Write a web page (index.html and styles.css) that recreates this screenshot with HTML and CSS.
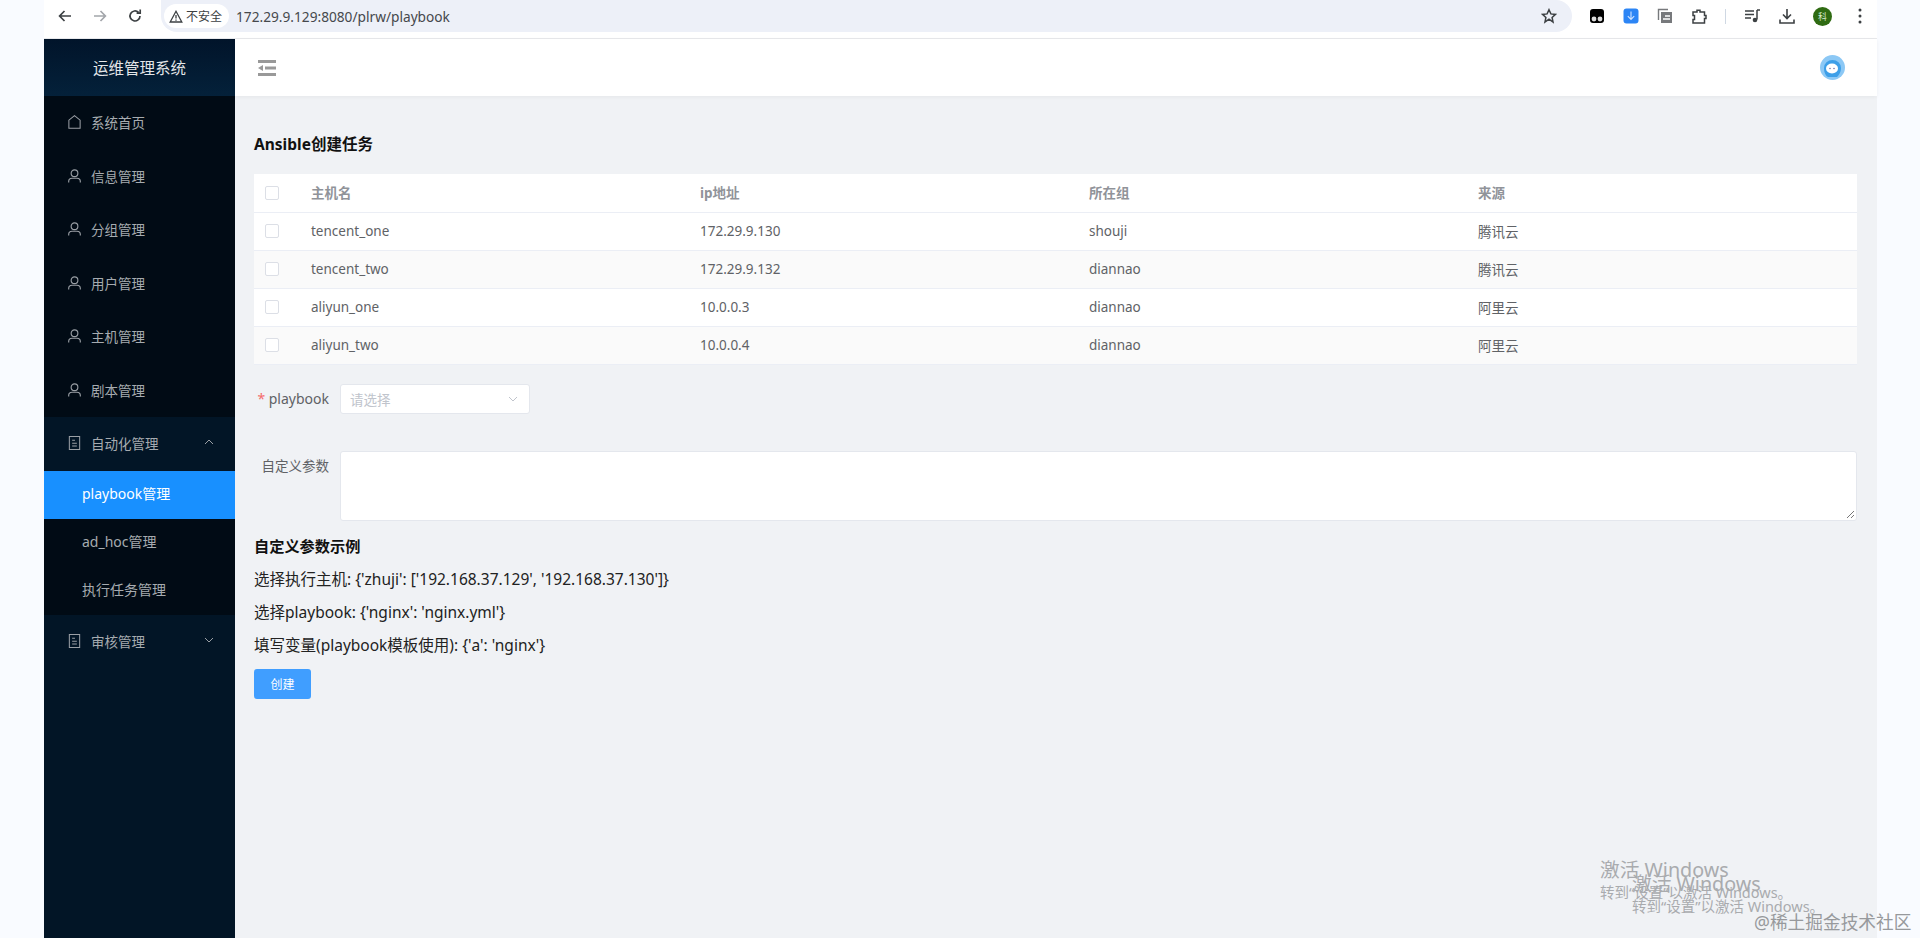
FILE: index.html
```html
<!DOCTYPE html>
<html lang="en">
<head>
    <meta charset="UTF-8">
    <meta name="viewport" content="width=device-width, initial-scale=1.0">
    <title>Ansible创建任务</title>
    <link rel="stylesheet" href="styles.css">
</head>
<body>
    <svg class="icon-defs" width="0" height="0">
        <symbol id="i-home" viewBox="0 0 16 16"><path d="M8 1.2 2 6v8.6h12V6z" fill="none" stroke="currentColor" stroke-width="1.1"/></symbol>
        <symbol id="i-user" viewBox="0 0 16 16"><circle cx="8" cy="5" r="3.6" fill="none" stroke="currentColor" stroke-width="1.2"/><path d="M1.8 15v-1.2c0-2 1.6-3.4 3.6-3.4h5.2c2 0 3.6 1.4 3.6 3.4V15" fill="none" stroke="currentColor" stroke-width="1.2"/></symbol>
        <symbol id="i-doc" viewBox="0 0 16 16"><path d="M2.5 1h11v14h-11zM5.5 5h3M5.5 8.2h5M5.5 11.2h5" fill="none" stroke="currentColor" stroke-width="1.1"/></symbol>
        <symbol id="i-down" viewBox="0 0 12 12"><path d="M2 4l4 4 4-4" fill="none" stroke="currentColor" stroke-width="1"/></symbol>
    </svg>

    <div class="window">
        <!-- browser toolbar -->
        <div class="browser-bar">
            <div class="nav-btns">
                <svg width="16" height="16" viewBox="0 0 16 16"><path d="M14 8H3M7.5 3 2.6 8l4.9 5" fill="none" stroke="#3c4043" stroke-width="1.7"/></svg>
                <svg width="16" height="16" viewBox="0 0 16 16"><path d="M2 8h11M8.500 3l4.900 5-4.900 5" fill="none" stroke="#a3a6ab" stroke-width="1.7"/></svg>
                <svg width="16" height="16" viewBox="0 0 16 16"><path d="M13 8a5 5 0 1 1-1.500-3.600M13.200 1.600v3.600H9.600" fill="none" stroke="#3c4043" stroke-width="1.700"/></svg>
            </div>
            <div class="omnibox">
                <div class="security-chip">
                    <svg width="14" height="13" viewBox="0 0 14 13"><path d="M7 1.300 1.200 12h11.600zM7 5v3.600M7 9.600v1.200" fill="none" stroke="#3c4043" stroke-width="1.300"/></svg>
                    <span>不安全</span>
                </div>
                <span class="url">172.29.9.129:8080/plrw/playbook</span>
                <svg class="star" width="16" height="16" viewBox="0 0 16 16"><path d="m8 1.700 1.900 4.200 4.600.5-3.400 3.100.9 4.500L8 11.200l-4 2.800.9-4.500L1.500 6.400l4.600-.5z" fill="none" stroke="#3c4043" stroke-width="1.500"/></svg>
            </div>
            <div class="ext-icons">
                <svg width="16" height="16" viewBox="0 0 16 16"><rect x="1" y="1" width="14" height="14" rx="3" fill="#000"/><circle cx="5" cy="11" r="2.400" fill="#ddd"/><circle cx="11" cy="11" r="2.400" fill="#ddd"/></svg>
                <svg width="16" height="16" viewBox="0 0 16 16"><rect x="0.500" y="0.500" width="15" height="15" rx="3" fill="#2c85f5"/><path d="M8 3.500v8M4.800 8.200 8 11.500l3.200-3.300" fill="none" stroke="#cfe3ff" stroke-width="1.100"/></svg>
                <svg width="16" height="16" viewBox="0 0 16 16"><path d="M1.500 12V1.500H11" fill="none" stroke="#77797c" stroke-width="1.400"/><rect x="4" y="4" width="11" height="11" fill="#77797c"/><path d="M8 8h5M6 11h7" stroke="#fff" stroke-width="1.300"/></svg>
                <svg width="17" height="17" viewBox="0 0 17 17"><path d="M2 4h4V2.200h3V4h4.500v3.500H15v3h-1.500V15H2v-3.500h1.500v-4H2z" fill="none" stroke="#3c4043" stroke-width="1.500"/></svg>
                <span class="ext-sep"></span>
                <svg width="17" height="16" viewBox="0 0 17 16"><path d="M1 3h9M1 6.500h9M1 10h6" stroke="#3c4043" stroke-width="1.500"/><path d="M13 2v9.500" stroke="#3c4043" stroke-width="1.500"/><path d="M13 2h3" stroke="#3c4043" stroke-width="1.500"/><circle cx="11" cy="12" r="2.300" fill="#3c4043"/></svg>
                <svg width="16" height="16" viewBox="0 0 16 16"><path d="M8 1v9M4 6.500 8 10.500l4-4M1 11.500V15h14v-3.500" fill="none" stroke="#3c4043" stroke-width="1.600"/></svg>
                <span class="profile">科</span>
                <svg class="dots" width="4" height="16" viewBox="0 0 4 16"><circle cx="2" cy="2" r="1.500" fill="#3c4043"/><circle cx="2" cy="8" r="1.500" fill="#3c4043"/><circle cx="2" cy="14" r="1.500" fill="#3c4043"/></svg>
            </div>
        </div>

        <div class="app">
            <!-- left menu -->
            <aside class="sidebar">
                <div class="logo">运维管理系统</div>
                <ul class="menu">
                    <li class="menu-item"><svg class="menu-icon"><use href="#i-home"/></svg>系统首页</li>
                    <li class="menu-item"><svg class="menu-icon"><use href="#i-user"/></svg>信息管理</li>
                    <li class="menu-item"><svg class="menu-icon"><use href="#i-user"/></svg>分组管理</li>
                    <li class="menu-item"><svg class="menu-icon"><use href="#i-user"/></svg>用户管理</li>
                    <li class="menu-item"><svg class="menu-icon"><use href="#i-user"/></svg>主机管理</li>
                    <li class="menu-item"><svg class="menu-icon"><use href="#i-user"/></svg>剧本管理</li>
                </ul>
                <div class="menu-lower">
                    <div class="menu-item">
                        <svg class="menu-icon"><use href="#i-doc"/></svg>自动化管理
                        <svg class="menu-arrow flip"><use href="#i-down"/></svg>
                    </div>
                    <ul class="submenu">
                        <li class="sub-item active">playbook管理</li>
                        <li class="sub-item">ad_hoc管理</li>
                        <li class="sub-item">执行任务管理</li>
                    </ul>
                    <div class="menu-item">
                        <svg class="menu-icon"><use href="#i-doc"/></svg>审核管理
                        <svg class="menu-arrow"><use href="#i-down"/></svg>
                    </div>
                </div>
            </aside>

            <div class="main">
                <header class="topbar">
                    <svg class="fold-icon" width="18" height="16" viewBox="0 0 18 16">
                        <path d="M0 1.500h18M7 8h11M0 14.500h18" stroke="#999" stroke-width="3"/>
                        <path d="M0 8l5-3v6z" fill="#999"/>
                    </svg>
                    <svg class="mascot" width="25" height="25" viewBox="0 0 25 25">
                        <circle cx="12.500" cy="12.500" r="12.500" fill="#8cc8f5"/>
                        <path d="M4 13a8.500 8 0 0 1 17 0c0 5-3 8-4 9H8c-2-1-4-4-4-9z" fill="#3d9fe8"/>
                        <ellipse cx="12" cy="13.500" rx="6" ry="5" fill="#fff"/>
                        <circle cx="10" cy="13.500" r=".8" fill="#77a"/>
                        <circle cx="14" cy="13.500" r=".8" fill="#77a"/>
                    </svg>
                </header>

                <div class="content">
                    <h3 class="page-title">Ansible创建任务</h3>

                    <table class="host-table">
                        <thead>
                            <tr>
                                <th class="check-col"><span class="checkbox"></span></th>
                                <th>主机名</th>
                                <th>ip地址</th>
                                <th>所在组</th>
                                <th>来源</th>
                            </tr>
                        </thead>
                        <tbody>
                            <tr>
                                <td class="check-col"><span class="checkbox"></span></td>
                                <td>tencent_one</td>
                                <td>172.29.9.130</td>
                                <td>shouji</td>
                                <td>腾讯云</td>
                            </tr>
                            <tr class="striped">
                                <td class="check-col"><span class="checkbox"></span></td>
                                <td>tencent_two</td>
                                <td>172.29.9.132</td>
                                <td>diannao</td>
                                <td>腾讯云</td>
                            </tr>
                            <tr>
                                <td class="check-col"><span class="checkbox"></span></td>
                                <td>aliyun_one</td>
                                <td>10.0.0.3</td>
                                <td>diannao</td>
                                <td>阿里云</td>
                            </tr>
                            <tr class="striped">
                                <td class="check-col"><span class="checkbox"></span></td>
                                <td>aliyun_two</td>
                                <td>10.0.0.4</td>
                                <td>diannao</td>
                                <td>阿里云</td>
                            </tr>
                        </tbody>
                    </table>

                    <div class="form-row select-row">
                        <label class="form-label"><span class="required">*</span> playbook</label>
                        <div class="select-box">
                            <span>请选择</span>
                            <svg width="12" height="12"><use href="#i-down"/></svg>
                        </div>
                    </div>

                    <div class="form-row text-row">
                        <label class="form-label small">自定义参数</label>
                        <div class="text-box">
                            <svg class="resize-grip" width="9" height="9" viewBox="0 0 9 9"><path d="M1 8l7-7M5 8l3-3" stroke="#777" stroke-width="1"/></svg>
                        </div>
                    </div>

                    <h3 class="example-title">自定义参数示例</h3>
                    <p class="example-line">选择执行主机: {'zhuji': ['192.168.37.129', '192.168.37.130']}</p>
                    <p class="example-line">选择playbook: {'nginx': 'nginx.yml'}</p>
                    <p class="example-line">填写变量(playbook模板使用): {'a': 'nginx'}</p>

                    <button class="create-btn">创建</button>
                </div>
            </div>
        </div>
    </div>

    <!-- overlays baked into the screenshot -->
    <div class="activate one">
        <div class="activate-big">激活 Windows</div>
        <div class="activate-small">转到“设置”以激活 Windows。</div>
    </div>
    <div class="activate two">
        <div class="activate-big">激活 Windows</div>
        <div class="activate-small">转到“设置”以激活 Windows。</div>
    </div>
    <div class="juejin-mark">@稀土掘金技术社区</div>
</body>
</html>
```

FILE: styles.css
```css
* {
    margin: 0;
    padding: 0;
    box-sizing: border-box;
}

html, body {
    height: 100%;
    overflow: hidden;
}

body {
    background-color: #f9fbff;
    font-family: "Noto Sans", "Noto Sans CJK SC", sans-serif;
    position: relative;
}

ul {
    list-style: none;
}

.icon-defs {
    position: absolute;
}

.window {
    width: 1833px;
    height: 938px;
    margin-left: 44px;
    display: flex;
    flex-direction: column;
}

/* browser toolbar */
.browser-bar {
    height: 39px;
    flex: none;
    display: flex;
    background-color: #fff;
    border-bottom: 1px solid #e8e9ec;
}

.nav-btns {
    width: 117px;
    height: 32px;
    display: flex;
    align-items: center;
    gap: 19px;
    padding-left: 13px;
    flex: none;
}

.omnibox {
    width: 1411px;
    height: 32px;
    flex: none;
    display: flex;
    align-items: center;
    background-color: #edf0f8;
    border-radius: 0 18px 18px 18px;
    padding-left: 3px;
    padding-right: 15px;
}

.security-chip {
    width: 65px;
    height: 24px;
    display: flex;
    align-items: center;
    gap: 3px;
    padding-left: 5px;
    background-color: #fff;
    border-radius: 12px;
    font-size: 12px;
    color: #3c4043;
}

.url {
    margin-left: 7px;
    font-size: 13.7px;
    color: #45484c;
}

.star {
    margin-left: auto;
}

.ext-icons {
    height: 32px;
    flex: 1;
    display: flex;
    align-items: center;
    gap: 18px;
    padding-left: 17px;
}

.ext-sep {
    width: 1px;
    height: 15px;
    margin: 0 0 0 -1px;
    background-color: #cfd8e3;
}

.profile {
    width: 19px;
    height: 19px;
    border-radius: 50%;
    background-color: #2f6b12;
    color: #d8ead0;
    font-size: 9px;
    display: flex;
    align-items: center;
    justify-content: center;
}

.dots {
    margin-left: 8px;
}

/* app shell */
.app {
    flex: 1;
    display: flex;
    min-height: 0;
}

.sidebar {
    width: 191px;
    flex: none;
    display: flex;
    flex-direction: column;
    background-color: #021526;
}

.logo {
    height: 57px;
    flex: none;
    display: flex;
    align-items: center;
    justify-content: center;
    font-size: 15.5px;
    color: #e3e6e9;
    background: linear-gradient(#01142a, #04213a);
}

.menu {
    height: 321px;
    flex: none;
    background-color: #010b15;
}

.menu-item {
    height: 53.5px;
    display: flex;
    align-items: center;
    padding-left: 23px;
    padding-bottom: 1px;
    font-size: 13.5px;
    color: #a6abb0;
    position: relative;
}

.menu-icon {
    width: 15px;
    height: 16px;
    margin-right: 9px;
    color: #9a9fa5;
    flex: none;
}

.menu-arrow {
    width: 12px;
    height: 12px;
    position: absolute;
    right: 20px;
    top: 19px;
    color: #9a9fa5;
}

.menu-arrow.flip {
    transform: rotate(180deg);
}

.submenu {
    background-color: #010b15;
}

.sub-item {
    height: 48px;
    display: flex;
    align-items: center;
    padding-left: 38px;
    padding-bottom: 3px;
    font-size: 14px;
    color: #a6abb0;
}

.sub-item.active {
    background-color: #1890ff;
    color: #fff;
}

.main {
    flex: 1;
    min-width: 0;
    display: flex;
    flex-direction: column;
    background-color: #f0f2f5;
}

.topbar {
    height: 57px;
    flex: none;
    display: flex;
    align-items: center;
    justify-content: space-between;
    padding: 0 32px 0 23px;
    background-color: #fff;
    box-shadow: 0 1px 4px rgba(0, 0, 0, 0.05);
}

.content {
    padding: 0 20px 0 19px;
}

.page-title {
    margin-top: 37px;
    height: 22px;
    line-height: 22px;
    font-size: 15.5px;
    font-weight: 700;
    color: #111;
}

.host-table {
    width: 100%;
    margin-top: 19px;
    border-collapse: collapse;
    table-layout: fixed;
    background-color: #fff;
    font-size: 13.5px;
    color: #606266;
}

.host-table th,
.host-table td {
    height: 38px;
    padding: 0 10px;
    text-align: left;
    border-bottom: 1px solid #ebeef5;
    font-weight: 400;
}

.host-table th {
    color: #909399;
    font-weight: 700;
    padding-bottom: 2px;
}

.host-table .check-col {
    width: 47px;
    padding: 0 0 0 11px;
}

.host-table tr.striped td {
    background-color: #fafafa;
}

.checkbox {
    display: block;
    width: 14px;
    height: 14px;
    background-color: #fff;
    border: 1px solid #dcdfe6;
    border-radius: 2px;
}

.form-row {
    display: flex;
}

.select-row {
    margin-top: 19px;
    align-items: center;
}

.text-row {
    margin-top: 37px;
}

.form-label {
    width: 75px;
    flex: none;
    text-align: right;
    font-size: 14px;
    color: #606266;
}

.form-label.small {
    padding-top: 4px;
    font-size: 13.5px;
}

.required {
    color: #f56c6c;
}

.select-box {
    width: 190px;
    height: 30px;
    margin-left: 11px;
    display: flex;
    align-items: center;
    justify-content: space-between;
    padding: 0 10px 0 9px;
    background-color: #fff;
    border: 1px solid #e4e7ed;
    border-radius: 3px;
    font-size: 13.5px;
    color: #c0c4cc;
}

.text-box {
    flex: 1;
    height: 70px;
    margin-left: 11px;
    position: relative;
    background-color: #fff;
    border: 1px solid #e4e7ed;
    border-radius: 3px;
}

.resize-grip {
    position: absolute;
    right: 1px;
    bottom: 1px;
}

.example-title {
    margin-top: 14px;
    height: 22px;
    line-height: 22px;
    font-size: 15.2px;
    font-weight: 700;
    color: #111;
}

.example-line {
    margin-top: 11px;
    height: 22px;
    line-height: 22px;
    font-size: 15.5px;
    color: #222;
}

.create-btn {
    display: block;
    width: 57px;
    height: 30px;
    margin-top: 13px;
    background-color: #409eff;
    border: none;
    border-radius: 3px;
    color: #fff;
    font-family: inherit;
    font-size: 12px;
}

/* watermarks */
.activate {
    position: absolute;
    color: #a9abae;
}

.activate.one {
    left: 1600px;
    top: 857px;
}

.activate.two {
    left: 1632px;
    top: 871px;
}

.activate-big {
    font-size: 19.7px;
    line-height: 26px;
}

.activate-small {
    font-size: 14.5px;
    line-height: 18px;
    margin-top: 0;
}

.juejin-mark {
    position: absolute;
    left: 1754px;
    top: 910px;
    font-size: 17.7px;
    line-height: 24px;
    color: #97999c;
}
```
